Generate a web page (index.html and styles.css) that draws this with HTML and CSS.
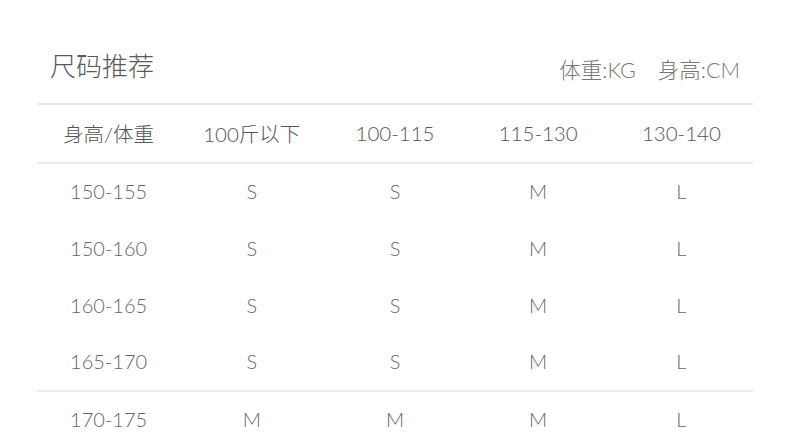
FILE: index.html
```html
<!DOCTYPE html>
<html lang="zh">
<head>
<meta charset="utf-8">
<link rel="stylesheet" href="styles.css">
</head>
<body>
<div class="page">
  <div class="head">
    <div class="title">尺码推荐</div>
    <div class="units"><span>体重:KG</span><span>身高:CM</span></div>
  </div>
  <div class="table">
    <div class="row hdr">
      <div>身高/体重</div><div>100斤以下</div><div>100-115</div><div>115-130</div><div>130-140</div>
    </div>
    <div class="row"><div>150-155</div><div>S</div><div>S</div><div>M</div><div>L</div></div>
    <div class="row"><div>150-160</div><div>S</div><div>S</div><div>M</div><div>L</div></div>
    <div class="row"><div>160-165</div><div>S</div><div>S</div><div>M</div><div>L</div></div>
    <div class="row sep"><div>165-170</div><div>S</div><div>S</div><div>M</div><div>L</div></div>
    <div class="row"><div>170-175</div><div>M</div><div>M</div><div>M</div><div>L</div></div>
  </div>
</div>
</body>
</html>
```
FILE: styles.css
```css
html, body { margin: 0; padding: 0; background: #fff; }
body {
  font-family: Lato, "Noto Sans CJK SC", sans-serif;
  font-weight: 300;
  color: #666;
  width: 790px;
  height: 448px;
  overflow: hidden;
}
.page { padding: 0 37px; }
.head {
  display: flex;
  justify-content: space-between;
  align-items: flex-end;
  height: 105px;
  border-bottom: 2px solid #ebebeb;
  box-sizing: border-box;
  padding: 0 13px 20px 13px;
}
.title { font-size: 26px; color: #5a5a5a; line-height: 30px; margin-bottom: 2px; font-weight: 300; }
.units { display: flex; gap: 22px; font-size: 21.5px; line-height: 24px; color: #777; margin-bottom: 1px; }
.table { display: flex; flex-direction: column; }
.row {
  display: grid;
  grid-template-columns: repeat(5, 1fr);
  height: 57px;
  padding-bottom: 4px;
  box-sizing: border-box;
  align-items: center;
  text-align: center;
  font-size: 20px;
}
.row.hdr { height: 59px; padding-bottom: 2px; border-bottom: 2px solid #ebebeb; color: #555; font-size: 20.5px; }
.row.sep { border-bottom: 2px solid #ebebeb; }
```
